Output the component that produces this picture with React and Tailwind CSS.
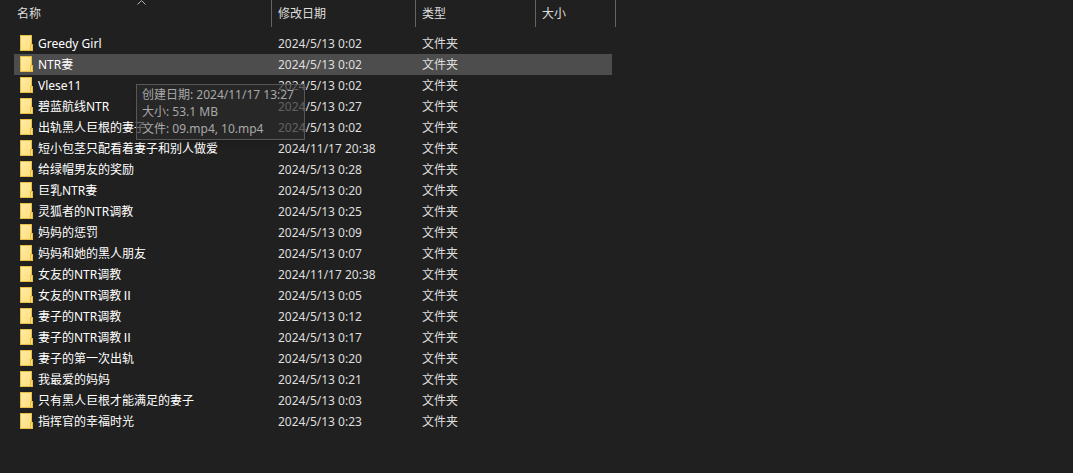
import { useState } from "react";

const folders = [
  { name: "Greedy Girl", modified: "2024/5/13 0:02" },
  {
    name: "NTR妻",
    modified: "2024/5/13 0:02",
    details: ["创建日期: 2024/11/17 13:27", "大小: 53.1 MB", "文件: 09.mp4, 10.mp4"],
  },
  { name: "Vlese11", modified: "2024/5/13 0:02" },
  { name: "碧蓝航线NTR", modified: "2024/5/13 0:27" },
  { name: "出轨黑人巨根的妻子", modified: "2024/5/13 0:02" },
  { name: "短小包茎只配看着妻子和别人做爱", modified: "2024/11/17 20:38" },
  { name: "给绿帽男友的奖励", modified: "2024/5/13 0:28" },
  { name: "巨乳NTR妻", modified: "2024/5/13 0:20" },
  { name: "灵狐者的NTR调教", modified: "2024/5/13 0:25" },
  { name: "妈妈的惩罚", modified: "2024/5/13 0:09" },
  { name: "妈妈和她的黑人朋友", modified: "2024/5/13 0:07" },
  { name: "女友的NTR调教", modified: "2024/11/17 20:38" },
  { name: "女友的NTR调教Ⅱ", modified: "2024/5/13 0:05" },
  { name: "妻子的NTR调教", modified: "2024/5/13 0:12" },
  { name: "妻子的NTR调教Ⅱ", modified: "2024/5/13 0:17" },
  { name: "妻子的第一次出轨", modified: "2024/5/13 0:20" },
  { name: "我最爱的妈妈", modified: "2024/5/13 0:21" },
  { name: "只有黑人巨根才能满足的妻子", modified: "2024/5/13 0:03" },
  { name: "指挥官的幸福时光", modified: "2024/5/13 0:23" },
];

function FolderIcon() {
  return (
    <svg className="h-4 w-[13px] shrink-0" viewBox="0 0 13 16" shapeRendering="crispEdges" aria-hidden="true">
      <defs>
        <linearGradient id="folder-fill" x1="0" y1="0" x2="1" y2="1">
          <stop offset="0" stopColor="#ffeba6" />
          <stop offset="1" stopColor="#ffdf7c" />
        </linearGradient>
      </defs>
      <path d="M0 0H12V9H13V16H0Z" fill="#e8bf42" />
      <path d="M1 1H11V9H10V15H1Z" fill="url(#folder-fill)" />
      <path d="M11 10H12V15H11Z" fill="#ffdf7c" />
    </svg>
  );
}

function SortArrow() {
  return (
    <svg
      className="absolute top-0 left-[123px] h-[5px] w-[9px]"
      viewBox="0 0 9 5"
      fill="none"
      stroke="#b4b4b4"
      aria-hidden="true"
    >
      <path d="M0.5 4.5L4.5 0.5L8.5 4.5" />
    </svg>
  );
}

function ColumnHeader({ label, sorted, first, colSpan }) {
  return (
    <th
      className="p-0 pb-[6px] font-normal"
      scope="col"
      colSpan={colSpan}
      aria-sort={sorted ? "ascending" : undefined}
    >
      <button
        className={`relative flex h-[27px] w-full items-center border-r border-[#636363] text-left ${
          first ? "pl-[3px]" : "pl-[6px]"
        }`}
        type="button"
      >
        {sorted && <SortArrow />}
        {label}
      </button>
    </th>
  );
}

function DetailsTooltip({ lines }) {
  return (
    <div
      className="pointer-events-none absolute top-[30px] left-[122px] z-10 border border-[#575757] bg-[#2b2b2b]/70 pt-[1px] pr-[10px] pb-[2px] pl-[5px] leading-[17px] whitespace-nowrap text-[#a8a8a8] shadow-md"
      role="tooltip"
    >
      {lines.map((line) => (
        <p key={line}>{line}</p>
      ))}
    </div>
  );
}

export default function App() {
  const [active, setActive] = useState("NTR妻");

  return (
    <main className="min-h-screen bg-[#202020] pl-[14px] font-['Noto_Sans','Noto_Sans_CJK_SC',sans-serif] text-[12px] leading-[17px] text-[#dedede]">
      <table className="w-[602px] table-fixed border-collapse">
        <colgroup>
          <col className="w-[258px]" />
          <col className="w-[144px]" />
          <col className="w-[120px]" />
          <col className="w-[76px]" />
          <col className="w-[4px]" />
        </colgroup>
        <thead>
          <tr>
            <ColumnHeader label="名称" sorted first />
            <ColumnHeader label="修改日期" />
            <ColumnHeader label="类型" />
            <ColumnHeader label="大小" colSpan={2} />
          </tr>
        </thead>
        <tbody>
          {folders.map((folder) => {
            const isActive = folder.name === active;

            return (
              <tr
                key={folder.name}
                className={`h-[21px] cursor-default ${isActive ? "[&>td]:bg-[#4d4d4d]" : ""}`}
                onClick={() => setActive(folder.name)}
              >
                <td className="relative p-0 align-top">
                  <div className="flex h-[21px] items-start gap-[5px] py-[2px] pl-[6px] whitespace-nowrap text-white">
                    <FolderIcon />
                    <span>{folder.name}</span>
                  </div>
                  {isActive && folder.details && <DetailsTooltip lines={folder.details} />}
                </td>
                <td className="p-0 pl-[6px]">{folder.modified}</td>
                <td className="p-0 pl-[6px]">文件夹</td>
                <td className="p-0" />
              </tr>
            );
          })}
        </tbody>
      </table>
    </main>
  );
}
